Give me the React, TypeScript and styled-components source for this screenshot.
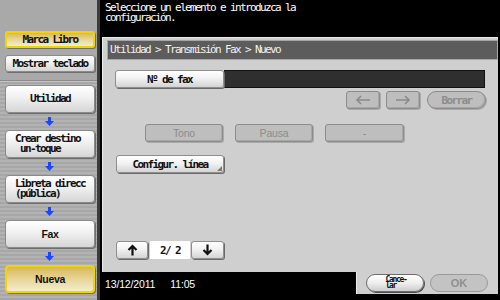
import React from "react";
import styled, { createGlobalStyle, css } from "styled-components";

const MONO = `"DejaVu Sans Mono", "Liberation Mono", monospace`;
const SANS = `"Liberation Sans", Arial, sans-serif`;

const Global = createGlobalStyle`
  html, body { margin: 0; padding: 0; background: #000; }
  body { width: 500px; height: 300px; overflow: hidden; }
  * { box-sizing: border-box; }
`;

const monoText = css`
  font-family: ${MONO};
  font-size: 11px;
  letter-spacing: -1.62px;
`;

const Screen = styled.div`
  width: 500px;
  height: 300px;
  display: grid;
  grid-template-columns: 100px 400px;
  background: #000;
  font-family: ${MONO};
`;

/* ---------- Sidebar ---------- */
const Sidebar = styled.aside`
  display: flex;
  flex-direction: column;
  border-right: 3px solid #3c3c3c;
  background: repeating-linear-gradient(to bottom, #b3b3b3 0 2px, #a7a7a7 2px 4px);
`;

const SideTop = styled.div`
  height: 81px;
  padding: 31px 2px 0 5px;
  display: flex;
  flex-direction: column;
  gap: 7px;
  background: #a9a9a9;
  border-bottom: 1px solid #8c8c8c;
  box-shadow: 0 1px 0 #c4c4c4;
`;

const SideFlow = styled.div`
  padding: 4px 2px 0 5px;
  display: flex;
  flex-direction: column;
`;

const goldFace = css`
  background: linear-gradient(to bottom, #d6b75e 0%, #e6d390 45%, #f4edcf 100%);
  border: 2px solid #f2d400;
`;
const lightFace = css`
  background: linear-gradient(to bottom, #ffffff 0%, #f0f0f0 45%, #d6d6d6 100%);
  border: 1px solid #8a8a8a;
`;

const SideButton = styled.div<{ $gold?: boolean }>`
  height: 17px;
  border-radius: 3px;
  display: flex;
  align-items: center;
  justify-content: center;
  ${monoText};
  font-weight: bold;
  line-height: 1;
  color: #111;
  box-shadow: 1px 1px 0 #6e6e6e;
  ${(p) => (p.$gold ? goldFace : lightFace)}
`;

const Step = styled.div<{ $gold?: boolean; $left?: boolean; $sans?: boolean }>`
  height: 28px;
  border-radius: 4px;
  display: flex;
  flex-direction: column;
  justify-content: center;
  align-items: ${(p) => (p.$left ? "flex-start" : "center")};
  padding-left: ${(p) => (p.$left ? "9px" : "0")};
  ${(p) =>
    p.$sans
      ? css`
          font: bold 10.5px/10px ${SANS};
          letter-spacing: -0.3px;
        `
      : css`
          ${monoText};
          font-weight: bold;
          line-height: 10px;
        `}
  color: #111;
  white-space: pre;
  box-shadow: 1px 1px 0 #6e6e6e;
  ${(p) => (p.$gold ? goldFace : lightFace)}
`;

const Connector = styled.div`
  height: 17px;
  display: flex;
  align-items: center;
  justify-content: center;
  padding-right: 2px;
`;

const BlueArrow = () => (
  <svg width="9" height="9" viewBox="0 0 9 9">
    <rect x="3" y="0" width="3" height="4" fill="#1b46ff" />
    <polygon points="0,4 9,4 4.5,9" fill="#1b46ff" />
  </svg>
);

/* ---------- Main ---------- */
const Main = styled.main`
  display: flex;
  flex-direction: column;
  background: #000;
`;

const Message = styled.div`
  height: 37px;
  padding: 3px 0 0 5px;
  color: #fff;
  ${monoText};
  line-height: 10px;
  white-space: pre;
`;

const Panel = styled.section`
  flex: 1;
  margin: 0 2px 0 2px;
  background: #cfcfcf;
  border-left: 1px solid #ececec;
  border-top: 1px solid #ececec;
  display: flex;
  flex-direction: column;
  padding: 2px 0 0 4px;
`;

const Header = styled.div`
  height: 20px;
  background: #5c5c5c;
  border: 1px solid #a6a6a6;
  color: #f2f2f2;
  ${monoText};
  line-height: 18px;
  padding-left: 2px;
  white-space: pre;
`;

const Body = styled.div`
  flex: 1;
  display: flex;
  flex-direction: column;
  padding: 10px 12px 0 8px;
`;

const Row = styled.div<{ $top?: number; $justify?: string; $gap?: number; $indent?: number }>`
  display: flex;
  align-items: center;
  margin-top: ${(p) => p.$top ?? 0}px;
  justify-content: ${(p) => p.$justify ?? "flex-start"};
  gap: ${(p) => p.$gap ?? 0}px;
  padding-left: ${(p) => p.$indent ?? 0}px;
`;

const LightButton = styled.div<{ $w: number; $corner?: boolean }>`
  position: relative;
  width: ${(p) => p.$w}px;
  height: 18px;
  border-radius: 3px;
  display: flex;
  align-items: center;
  justify-content: center;
  ${monoText};
  font-weight: bold;
  line-height: 1;
  color: #111;
  background: linear-gradient(to bottom, #ffffff 0%, #f2f2f2 45%, #d4d4d4 100%);
  border: 1px solid #8e8e8e;
  box-shadow: 1px 1px 0 #6a6a6a;
  ${(p) =>
    p.$corner &&
    css`
      &::after {
        content: "";
        position: absolute;
        right: 1px;
        bottom: 1px;
        border-style: solid;
        border-width: 0 0 5px 5px;
        border-color: transparent transparent #7a7a7a transparent;
      }
    `}
`;

const FaxField = styled.div`
  width: 261px;
  height: 18px;
  background: #2f2f2f;
  border: 1px solid #111;
  border-left: none;
`;

const DisabledButton = styled.div<{ $w: number; $pill?: boolean; $sans?: boolean }>`
  width: ${(p) => p.$w}px;
  height: 18px;
  border-radius: ${(p) => (p.$pill ? "9px" : "3px")};
  display: flex;
  align-items: center;
  justify-content: center;
  background: #bebebe;
  border: 1px solid #8c8c8c;
  box-shadow: inset -1px -1px 0 #a8a8a8, 1px 1px 0 #a9a9a9;
  color: #8c8c8c;
  ${(p) =>
    p.$sans
      ? css`
          font: 10.5px/1 ${SANS};
          letter-spacing: -0.2px;
        `
      : css`
          ${monoText};
          font-weight: bold;
          line-height: 1;
        `}
`;

const PageBox = styled.div`
  width: 40px;
  height: 18px;
  margin: 0 1px 0 2px;
  background: #fff;
  display: flex;
  align-items: center;
  justify-content: center;
  ${monoText};
  font-weight: bold;
  line-height: 1;
  color: #111;
  white-space: pre;
`;

const Footer = styled.footer`
  height: 28px;
  display: flex;
`;

const DateArea = styled.div`
  flex: 1;
  padding: 0 0 4px 5px;
  display: flex;
  align-items: center;
  gap: 15px;
  color: #fff;
  font: 10.5px/1 ${SANS};
  letter-spacing: -0.15px;
`;

const Actions = styled.div`
  width: 142px;
  height: 22px;
  margin-right: 2px;
  background: #cfcfcf;
  border-left: 1px solid #ececec;
  display: flex;
  align-items: flex-start;
  padding: 2px 0 0 9px;
  gap: 6px;
`;

const Pill = styled.div<{ $disabled?: boolean }>`
  width: 58px;
  height: 18px;
  border-radius: 9px;
  display: flex;
  align-items: center;
  justify-content: center;
  ${(p) =>
    p.$disabled
      ? css`
          background: #c3c3c3;
          border: 1px solid #9a9a9a;
          color: #8f8f8f;
          font: bold 11px/1 ${SANS};
          transform-origin: center;
        `
      : css`
          background: linear-gradient(to bottom, #ffffff 0%, #eeeeee 50%, #cdcdcd 100%);
          border: 1px solid #6c6c6c;
          box-shadow: 1px 1px 0 #4c4c4c;
          color: #111;
        `}
`;

const TinyText = styled.span`
  font: bold 8px/6.5px ${MONO};
  letter-spacing: -1.3px;
  white-space: pre;
  text-align: left;
  margin-left: 2px;
`;

const LongArrow = ({ dir }: { dir: "left" | "right" }) => (
  <svg width="16" height="10" viewBox="0 0 16 10">
    {dir === "left" ? (
      <path d="M15 5 H2 M6 1 L2 5 L6 9" stroke="#8a8a8a" strokeWidth="1.6" fill="none" />
    ) : (
      <path d="M1 5 H14 M10 1 L14 5 L10 9" stroke="#8a8a8a" strokeWidth="1.6" fill="none" />
    )}
  </svg>
);

const BoldArrow = ({ dir }: { dir: "up" | "down" }) => (
  <svg width="11" height="12" viewBox="0 0 11 12">
    {dir === "up" ? (
      <path d="M5.5 11.5 V2 M1.5 6 L5.5 2 L9.5 6" stroke="#111" strokeWidth="2.2" fill="none" />
    ) : (
      <path d="M5.5 0.5 V10 M1.5 6 L5.5 10 L9.5 6" stroke="#111" strokeWidth="2.2" fill="none" />
    )}
  </svg>
);

const steps: { label: string; left?: boolean; sans?: boolean; gold?: boolean }[] = [
  { label: "Utilidad" },
  { label: "Crear destino\n un-toque", left: true },
  { label: "Libreta direcc\n(pública)", left: true },
  { label: "Fax", sans: true },
  { label: "Nueva", sans: true, gold: true },
];

export default function App() {
  return (
    <>
      <Global />
      <Screen>
        <Sidebar>
          <SideTop>
            <SideButton $gold>Marca Libro</SideButton>
            <SideButton>Mostrar teclado</SideButton>
          </SideTop>
          <SideFlow>
            {steps.map((s, i) => (
              <React.Fragment key={s.label}>
                {i > 0 && (
                  <Connector>
                    <BlueArrow />
                  </Connector>
                )}
                <Step $gold={s.gold} $left={s.left} $sans={s.sans}>
                  {s.label}
                </Step>
              </React.Fragment>
            ))}
          </SideFlow>
        </Sidebar>
        <Main>
          <Message>{"Seleccione un elemento e introduzca la\nconfiguración."}</Message>
          <Panel>
            <Header>{"Utilidad > Transmisión Fax > Nuevo"}</Header>
            <Body>
              <Row>
                <LightButton $w={109}>Nº de fax</LightButton>
                <FaxField />
              </Row>
              <Row $top={3} $justify="flex-end">
                <DisabledButton $w={34}>
                  <LongArrow dir="left" />
                </DisabledButton>
                <DisabledButton $w={34} style={{ marginLeft: 6 }}>
                  <LongArrow dir="right" />
                </DisabledButton>
                <DisabledButton $w={59} $pill style={{ marginLeft: 7 }}>
                  Borrar
                </DisabledButton>
              </Row>
              <Row $top={15} $gap={12} $indent={30}>
                <DisabledButton $w={78} $sans>
                  Tono
                </DisabledButton>
                <DisabledButton $w={78} $sans>
                  Pausa
                </DisabledButton>
                <DisabledButton $w={79} $sans>
                  -
                </DisabledButton>
              </Row>
              <Row $top={13} $indent={1}>
                <LightButton $w={108} $corner>
                  Configur. línea
                </LightButton>
              </Row>
              <Row $top={68} $indent={1}>
                <LightButton $w={32}>
                  <BoldArrow dir="up" />
                </LightButton>
                <PageBox>{"2/ 2"}</PageBox>
                <LightButton $w={33}>
                  <BoldArrow dir="down" />
                </LightButton>
              </Row>
            </Body>
          </Panel>
          <Footer>
            <DateArea>
              <span>13/12/2011</span>
              <span>11:05</span>
            </DateArea>
            <Actions>
              <Pill>
                <TinyText>{"Cance-\nlar"}</TinyText>
              </Pill>
              <Pill $disabled>OK</Pill>
            </Actions>
          </Footer>
        </Main>
      </Screen>
    </>
  );
}
